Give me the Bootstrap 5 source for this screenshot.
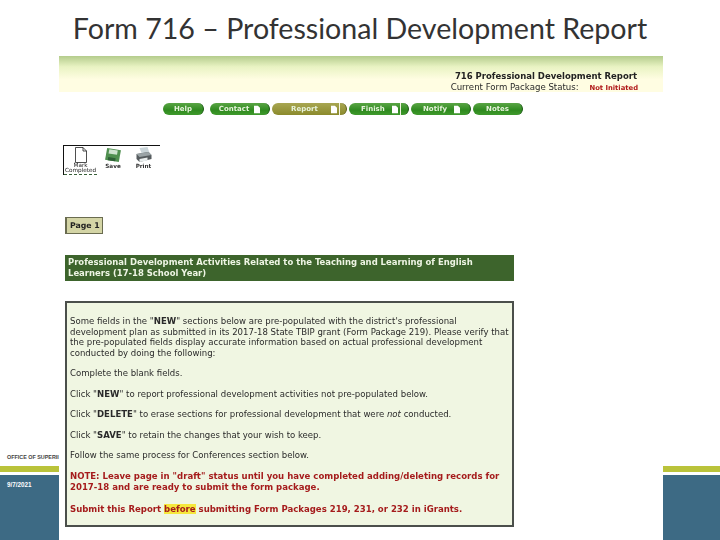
<!DOCTYPE html>
<html lang="en"><head><meta charset="utf-8">
<link href="https://cdn.jsdelivr.net/npm/bootstrap@5.3.0/dist/css/bootstrap.min.css" rel="stylesheet">
<style>
html,body{margin:0;background:#fff;overflow:hidden}
.slide{width:720px;height:540px;display:grid;grid-template-columns:59px 604px 57px;grid-template-rows:56px 484px}
.slide-title{grid-column:1/4;font-family:Lato,sans-serif;font-size:28.6px;line-height:56px;text-align:center;color:#333;margin:0;font-weight:400}
.side-l,.side-r{display:flex;flex-direction:column;justify-content:flex-end}
.foot-text{font:700 5.4px/6px "Liberation Sans",sans-serif;color:#444;white-space:nowrap;overflow:hidden;padding-left:7px;margin-bottom:6px}
.olive{height:6px;background:#bac33a;margin-bottom:3px}
.bluebox{height:65px;background:#3d6a84;color:#fff;font:700 6.3px/1 "Liberation Sans",sans-serif;padding:7px 0 0 7px}
.shot{font-family:"DejaVu Sans",sans-serif;font-size:8.55px;line-height:10.5px;color:#2a2a2a;filter:blur(.35px);display:flex;flex-direction:column;height:484px}
.hdr{height:36px;background:linear-gradient(#b4cc8c,#e9f3c3 30%,#fffde2 65%);text-align:right;padding:15px 25px 0 0;white-space:nowrap;line-height:10.5px;font-size:8.6px}
.hdr b{font-size:8.5px;color:#222;margin-right:1px}
.hdr .st{color:#b01818;font-weight:700;font-size:6.8px;margin-left:8px}
.navs{display:flex;margin:11px 0 0 104px;height:12px;gap:2px}
.pill{display:flex;align-items:center;justify-content:center;gap:5px;height:12px;border-radius:6px;background:linear-gradient(#5aa545,#2f8a1f 60%,#3f9a2c);color:#e8f4dc;font-weight:700;font-size:7px;line-height:12px;border-right:1px solid #16560f}
.pill.cur{background:linear-gradient(#a8a652,#8b8a2c);border-color:#5e5d18;gap:13px;justify-content:flex-start;padding-left:19px}
.pill.wide{gap:7px;justify-content:flex-start;padding-left:12px}
.pdoc{width:6px;height:9px}
.pdiv{width:1px;height:12px;background:#f4f4e4;margin-left:-11px}
.pill.wide .pdiv{margin-left:-5px}
.tools{display:flex;align-items:flex-start;margin:30px 0 0 4px;width:97px;height:30px;border-top:1px solid #111;border-left:1px solid #111;font-size:5.7px;line-height:5px;font-weight:700;color:#333;text-align:center}
.tool{display:flex;flex-direction:column;align-items:center;height:29px;padding-top:1px}
.tool.mk{width:33px;font-weight:400;border-bottom:1px dashed #385f38;color:#222}
.tool.sv{width:32px}
.tool.pr{width:29px}
.tool svg{display:block;margin-bottom:1px}
.tool.mk svg{margin-bottom:0}
.pg{align-self:flex-start;margin:42px 0 0 6px;width:38px;height:17px;border:1px solid #6a6c50;border-left-width:2px;background:#d4d5a6;font-weight:700;font-size:7.8px;line-height:15px;padding-left:3px;color:#222}
.gbar{margin:21px 0 0 6px;width:449px;height:26px;background:#3d642c;color:#eef5e4;font-weight:700;font-size:8.46px;line-height:11px;padding:2px 3px}
.panel{margin:20px 0 0 6px;width:449px;height:226px;border:2px solid #4b4f4b;background:#f0f6e2;padding:13px 3px 0 3px}
.panel p{margin:0 0 10px}
.panel .redt{color:#a51c1c;font-weight:700;font-size:8.55px;margin-bottom:11px;line-height:11px}
.panel mark{background:#f5e83c;color:#a51c1c;padding:0;font-weight:700}
</style></head><body>
<div class="slide">
<h1 class="slide-title">Form 716 – Professional Development Report</h1>
<div class="side-l"><div class="foot-text">OFFICE OF SUPERII</div><div class="olive"></div><div class="bluebox">9/7/2021</div></div>
<div class="shot">
 <div class="hdr"><b>716 Professional Development Report</b><br>Current Form Package Status: <span class="st">Not Initiated</span></div>
 <div class="navs">
  <div class="pill" style="width:41px">Help</div>
  <div class="pill ms-1" style="width:60px">Contact <svg class="pdoc" viewBox="0 0 7 9"><path d="M0 0h4.500l2.500 2.500V9H0z" fill="#fff"/></svg></div>
  <div class="pill cur" style="width:75px">Report <svg class="pdoc" viewBox="0 0 7 9"><path d="M0 0h4.500l2.500 2.500V9H0z" fill="#fff"/></svg><span class="pdiv"></span></div>
  <div class="pill wide" style="width:60px">Finish <svg class="pdoc" viewBox="0 0 7 9"><path d="M0 0h4.500l2.500 2.500V9H0z" fill="#fff"/></svg><span class="pdiv"></span></div>
  <div class="pill wide" style="width:60px">Notify <svg class="pdoc" viewBox="0 0 7 9"><path d="M0 0h4.500l2.500 2.500V9H0z" fill="#fff"/></svg></div>
  <div class="pill" style="width:50px">Notes</div>
 </div>
 <div class="tools">
  <div class="tool mk"><svg width="12" height="16" viewBox="0 0 12 16"><path d="M.5.500h7.500l3.500 3.500v11.500H.5zM8 .5V4h3.500" fill="#fff" stroke="#222" stroke-width=".8"/></svg>Mark<br>Completed</div>
  <div class="tool sv"><svg width="18" height="16" viewBox="0 0 17 15"><path d="M3 1l13 2-2 11-13-2z" fill="#4f8f4f"/><path d="M5 2l8 1.300-.7 4-8-1.300z" fill="#cfe3cf"/><path d="M4 9.500l7 1.100-.5 2.900-7-1.100z" fill="#2d5f35"/></svg>Save</div>
  <div class="tool pr"><svg width="17" height="16" viewBox="0 0 16 16"><path d="M4 1l8-1 2 6H6z" fill="#c9d4d8"/><path d="M1 7l12-2 3 3v4L4 15 1 12z" fill="#555b5e"/><path d="M1 7l12-2 3 3-12 2z" fill="#9aa3a6"/><path d="M4 12l8-1.500v3L4 15z" fill="#e9eeee"/></svg>Print</div>
 </div>
 <div class="pg">Page 1</div>
 <div class="gbar">Professional Development Activities Related to the Teaching and Learning of English Learners (17-18 School Year)</div>
 <div class="panel">
  <p>Some fields in the "<b>NEW</b>" sections below are pre-populated with the district's professional development plan as submitted in its 2017-18 State TBIP grant (Form Package 219). Please verify that the pre-populated fields display accurate information based on actual professional development conducted by doing the following:</p>
  <p>Complete the blank fields.</p>
  <p>Click "<b>NEW</b>" to report professional development activities not pre-populated below.</p>
  <p>Click "<b>DELETE</b>" to erase sections for professional development that were <i>not</i> conducted.</p>
  <p>Click "<b>SAVE</b>" to retain the changes that your wish to keep.</p>
  <p>Follow the same process for Conferences section below.</p>
  <p class="redt">NOTE: Leave page in "draft" status until you have completed adding/deleting records for 2017-18 and are ready to submit the form package.</p>
  <p class="redt">Submit this Report <mark>before</mark> submitting Form Packages 219, 231, or 232 in iGrants.</p>
 </div>
</div>
<div class="side-r"><div class="olive"></div><div class="bluebox"></div></div>
</div>
<script src="https://cdn.jsdelivr.net/npm/bootstrap@5.3.0/dist/js/bootstrap.bundle.min.js"></script>
</body></html>
